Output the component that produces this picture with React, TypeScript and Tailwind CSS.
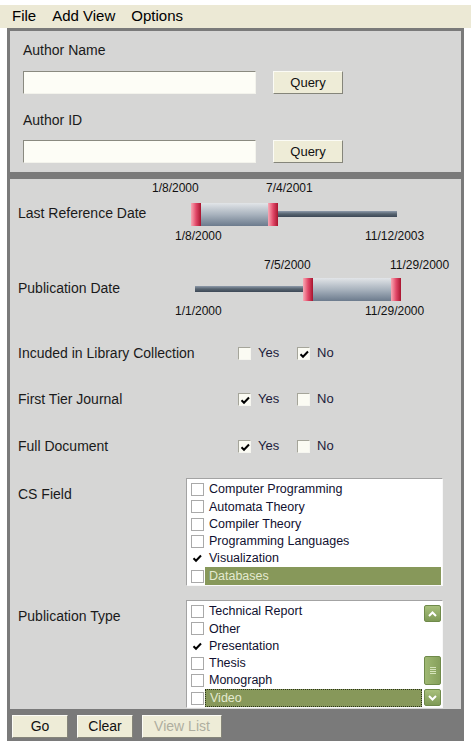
import React from "react";

function Check({ checked, flat }: { checked?: boolean; flat?: boolean }) {
  const cls = flat
    ? checked
      ? "relative inline-block shrink-0 w-[13px] h-[13px] bg-white"
      : "relative inline-block shrink-0 w-[13px] h-[13px] bg-white border border-[#a9a9a9]"
    : "relative inline-block shrink-0 w-[13px] h-[13px] bg-[#fbfbf3] border-t border-l border-t-[#a5a59a] border-l-[#a5a59a] border-r border-b border-r-[#f6f6f0] border-b-[#f6f6f0]";
  return (
    <span className={cls}>
      {checked && (
        <svg className="absolute left-0 top-0" width="13" height="13" viewBox="0 0 13 13">
          <path d="M2.5 6.2 L5 8.7 L10 3.5" fill="none" stroke="#000" strokeWidth="2" />
        </svg>
      )}
    </span>
  );
}

function XPButton({ children, w, disabled }: { children: React.ReactNode; w: string; disabled?: boolean }) {
  return (
    <div
      className={`${w} h-[23px] flex items-center justify-center bg-[#eeecd7] border-t border-l border-t-[#fbfbf5] border-l-[#fbfbf5] border-r border-b border-r-[#85857a] border-b-[#85857a] text-[14px] ${
        disabled ? "text-[#aeae9f]" : "text-[#111]"
      }`}
    >
      {children}
    </div>
  );
}

function Thumb({ left }: { left: string }) {
  return (
    <div
      className={`absolute ${left} top-[22px] w-[10px] h-[23px] bg-linear-to-r from-[#f6a8b6] via-[#e2486a] to-[#a8122e]`}
    />
  );
}

function DateLabel({ cls, children }: { cls: string; children: React.ReactNode }) {
  return <div className={`absolute ${cls} text-[12px] leading-[14px] text-[#111]`}>{children}</div>;
}

function Slider1() {
  return (
    <div className="relative w-[310px] h-[64px]">
      <DateLabel cls="left-[2px] top-0">1/8/2000</DateLabel>
      <DateLabel cls="left-[116px] top-0">7/4/2001</DateLabel>
      <div className="absolute left-[45px] top-[30px] w-[202px] h-[6px] bg-linear-to-b from-[#8f9bab] via-[#56636f] to-[#3d4856]" />
      <div className="absolute left-[41px] top-[22px] w-[87px] h-[23px] bg-linear-to-b from-[#e2e5e8] via-[#a9b3be] to-[#6c7b8d]" />
      <Thumb left="left-[41px]" />
      <Thumb left="left-[118px]" />
      <DateLabel cls="left-[25px] top-[48px]">1/8/2000</DateLabel>
      <DateLabel cls="left-[215px] top-[48px]">11/12/2003</DateLabel>
    </div>
  );
}

function Slider2() {
  return (
    <div className="relative w-[310px] h-[64px]">
      <DateLabel cls="left-[114px] top-[2px]">7/5/2000</DateLabel>
      <DateLabel cls="left-[240px] top-[2px]">11/29/2000</DateLabel>
      <div className="absolute left-[45px] top-[30px] w-[112px] h-[6px] bg-linear-to-b from-[#8f9bab] via-[#56636f] to-[#3d4856]" />
      <div className="absolute left-[153px] top-[22px] w-[98px] h-[23px] bg-linear-to-b from-[#e2e5e8] via-[#a9b3be] to-[#6c7b8d]" />
      <Thumb left="left-[153px]" />
      <Thumb left="left-[241px]" />
      <DateLabel cls="left-[25px] top-[48px]">1/1/2000</DateLabel>
      <DateLabel cls="left-[215px] top-[48px]">11/29/2000</DateLabel>
    </div>
  );
}

function YesNo({ yes, no }: { yes?: boolean; no?: boolean }) {
  return (
    <div className="flex items-center text-[13px] text-[#20203a]">
      <div className="flex items-center w-[59px]">
        <Check checked={yes} />
        <span className="ml-[7px]">Yes</span>
      </div>
      <div className="flex items-center">
        <Check checked={no} />
        <span className="ml-[7px]">No</span>
      </div>
    </div>
  );
}

type Item = { label: string; checked?: boolean; selected?: boolean; focus?: boolean };

function ListRow({ it }: { it: Item }) {
  return (
    <div className="flex items-center h-[17.3px]">
      <Check checked={it.checked} flat />
      <div
        className={`ml-[1px] flex-1 h-full flex items-center pl-[4px] ${
          it.selected ? "bg-[#87985a] text-[#e4ead0]" : "text-[#101030]"
        } ${it.focus ? "border border-dotted border-[#2a3318]" : ""}`}
      >
        {it.label}
      </div>
    </div>
  );
}

function Chevron({ up }: { up?: boolean }) {
  return (
    <svg width="9" height="6" viewBox="0 0 9 6">
      <path d={up ? "M1 5 L4.5 1.5 L8 5" : "M1 1 L4.5 4.5 L8 1"} fill="none" stroke="#fff" strokeWidth="2" />
    </svg>
  );
}

function ScrollBtn({ up }: { up?: boolean }) {
  return (
    <div className="w-[17px] h-[17px] rounded-[2px] flex items-center justify-center bg-linear-to-b from-[#a8c07c] to-[#7f9a56] border border-[#6f8a4a]">
      <Chevron up={up} />
    </div>
  );
}

export default function App() {
  const cs: Item[] = [
    { label: "Computer Programming" },
    { label: "Automata Theory" },
    { label: "Compiler Theory" },
    { label: "Programming Languages" },
    { label: "Visualization", checked: true },
    { label: "Databases", selected: true },
  ];
  const pt: Item[] = [
    { label: "Technical Report" },
    { label: "Other" },
    { label: "Presentation", checked: true },
    { label: "Thesis" },
    { label: "Monograph" },
    { label: "Video", selected: true, focus: true },
  ];
  return (
    <div className="w-[471px] h-[747px] bg-white overflow-hidden font-['Liberation_Sans',Arial,sans-serif] text-[#1a1a1a]">
      {/* menu */}
      <div className="mt-[5px] h-[23px] bg-[#ece9d5] flex items-center text-[15px] text-black">
        <span className="ml-[12px]">File</span>
        <span className="ml-[16px]">Add View</span>
        <span className="ml-[16px]">Options</span>
      </div>

      {/* frame */}
      <div className="mx-[7px] bg-[#7a7a7a] p-[3px]">
        {/* top panel */}
        <div className="h-[141px] bg-[#d6d6d5] pl-[13px] pt-[11px] text-[14px] text-[#1a1a1a]">
          <div className="leading-[16px]">Author Name</div>
          <div className="mt-[13px] flex items-center">
            <div className="w-[233px] h-[23px] bg-[#fdfdf6] border-t border-l border-t-[#8a8a80] border-l-[#8a8a80] border-r border-b border-r-[#f3f3ec] border-b-[#f3f3ec]" />
            <div className="ml-[17px]">
              <XPButton w="w-[70px]">
                <span className="text-[13px]">Query</span>
              </XPButton>
            </div>
          </div>
          <div className="mt-[18px] leading-[16px]">Author ID</div>
          <div className="mt-[12px] flex items-center">
            <div className="w-[233px] h-[23px] bg-[#fdfdf6] border-t border-l border-t-[#8a8a80] border-l-[#8a8a80] border-r border-b border-r-[#f3f3ec] border-b-[#f3f3ec]" />
            <div className="ml-[17px]">
              <XPButton w="w-[70px]">
                <span className="text-[13px]">Query</span>
              </XPButton>
            </div>
          </div>
        </div>

        {/* main panel */}
        <div className="mt-[7px] h-[530px] bg-[#d6d6d5] pl-[8px] pt-[2px] text-[14px] text-[#1a1a1a]">
          <div className="flex items-center h-[64px]">
            <div className="w-[132px]">Last Reference Date</div>
            <Slider1 />
          </div>
          <div className="mt-[11px] flex items-center h-[64px]">
            <div className="w-[132px]">Publication Date</div>
            <Slider2 />
          </div>
          <div className="mt-[23px] flex items-center h-[20px]">
            <div className="w-[220px]">Incuded in Library Collection</div>
            <YesNo no />
          </div>
          <div className="mt-[26px] flex items-center h-[20px]">
            <div className="w-[220px]">First Tier Journal</div>
            <YesNo yes />
          </div>
          <div className="mt-[27px] flex items-center h-[20px]">
            <div className="w-[220px]">Full Document</div>
            <YesNo yes />
          </div>
          <div className="mt-[22px] flex">
            <div className="w-[168px] pt-[6px]">CS Field</div>
            <div className="w-[257px] h-[108px] bg-white border-t border-l border-t-[#a3a3a3] border-l-[#a3a3a3] border-r border-b border-r-[#f8f8f8] border-b-[#f8f8f8] pl-[4px] pr-[1px] pt-[2px] text-[12.5px]">
              {cs.map((it) => (
                <ListRow key={it.label} it={it} />
              ))}
            </div>
          </div>
          <div className="mt-[14px] flex">
            <div className="w-[168px] pt-[6px]">Publication Type</div>
            <div className="w-[257px] h-[108px] bg-white border-t border-l border-t-[#a3a3a3] border-l-[#a3a3a3] border-r border-b border-r-[#f8f8f8] border-b-[#f8f8f8] pl-[4px] pr-[1px] pt-[2px] text-[12.5px] flex">
              <div className="flex-1 mr-[2px]">
                {pt.map((it) => (
                  <ListRow key={it.label} it={it} />
                ))}
              </div>
              <div className="w-[17px] flex flex-col pt-[2px]">
                <ScrollBtn up />
                <div className="mt-[34px] w-[17px] h-[29px] rounded-[2px] bg-linear-to-r from-[#9fb873] to-[#86a05c] border border-[#6f8a4a] flex flex-col items-center justify-center gap-[1px]">
                  <div className="w-[6px] h-[1px] bg-[#d6e4bc]" />
                  <div className="w-[6px] h-[1px] bg-[#d6e4bc]" />
                  <div className="w-[6px] h-[1px] bg-[#d6e4bc]" />
                  <div className="w-[6px] h-[1px] bg-[#d6e4bc]" />
                </div>
                <div className="mt-[4px]">
                  <ScrollBtn />
                </div>
              </div>
            </div>
          </div>
        </div>

        {/* bottom buttons */}
        <div className="mt-[6px] ml-[2px] flex gap-[9px]">
          <XPButton w="w-[56px]">Go</XPButton>
          <XPButton w="w-[56px]">Clear</XPButton>
          <XPButton w="w-[80px]" disabled>
            View List
          </XPButton>
        </div>
      </div>
    </div>
  );
}
